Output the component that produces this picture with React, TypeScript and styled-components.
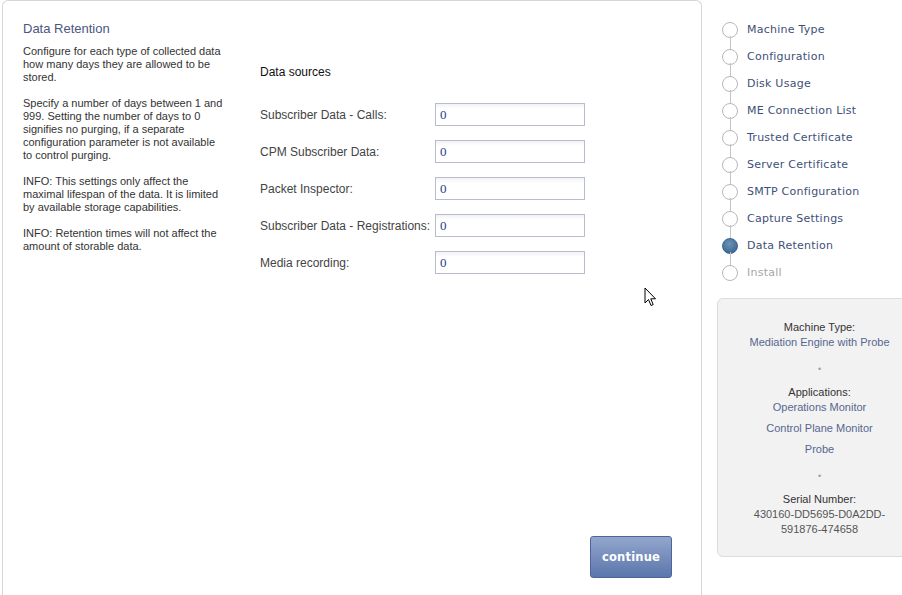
import React from "react";
import styled, { createGlobalStyle } from "styled-components";

const GlobalStyle = createGlobalStyle`
  html, body {
    margin: 0;
    padding: 0;
    background: #ffffff;
    overflow: hidden;
  }
  body {
    font-family: Tahoma, "Liberation Sans", Arial, sans-serif;
  }
`;

const Page = styled.div`
  display: flex;
  width: 940px;
  height: 595px;
  padding-left: 2px;
  box-sizing: border-box;
`;

const MainPanel = styled.div`
  position: relative;
  display: flex;
  flex-direction: column;
  flex-shrink: 0;
  width: 700px;
  height: 610px;
  box-sizing: border-box;
  border: 1px solid #d6d6d6;
  border-bottom: none;
  border-radius: 6px 6px 0 0;
`;

const Content = styled.div`
  display: flex;
  flex: 1;
  padding: 20px 0 0 20px;
`;

const InfoColumn = styled.div`
  width: 201px;
  flex-shrink: 0;
  color: #333333;
  font-size: 11px;
  line-height: 13px;
`;

const Title = styled.div`
  color: #4a5680;
  font-size: 13px;
  line-height: 16px;
  margin-bottom: 8px;
`;

const Para = styled.p`
  margin: 0 0 13px 0;
`;

const FormColumn = styled.div`
  padding: 44px 0 0 36px;
`;

const SourcesTitle = styled.div`
  color: #111111;
  font-size: 12px;
  line-height: 15px;
  margin-bottom: 16px;
`;

const FieldRow = styled.div`
  display: flex;
  align-items: center;
  height: 37px;
`;

const FieldLabel = styled.label`
  width: 175px;
  color: #444444;
  font-size: 12px;
`;

const NumberInput = styled.input`
  width: 150px;
  height: 23px;
  box-sizing: border-box;
  border: 1px solid #b9bccd;
  padding: 1px 4px 0;
  font-family: "Liberation Serif", "Times New Roman", serif;
  font-size: 13px;
  color: #283c8c;
  background: linear-gradient(#f1f2f5 0px, #ffffff 5px);
  outline: none;
`;

const Footer = styled.div`
  display: flex;
  justify-content: flex-end;
  padding: 0 29px 32px 0;
`;

const ContinueButton = styled.button`
  width: 82px;
  height: 42px;
  border: 1px solid #4d6699;
  border-radius: 3px;
  background: linear-gradient(#93a6cd, #5a76ab);
  color: #ffffff;
  font-family: "DejaVu Sans", Verdana, sans-serif;
  font-size: 11.5px;
  font-weight: bold;
  letter-spacing: 0.2px;
  cursor: pointer;
`;

const Cursor = styled.svg`
  position: absolute;
  left: 641px;
  top: 286px;
`;

const Sidebar = styled.div`
  display: flex;
  flex-direction: column;
  flex-shrink: 0;
  padding: 16px 0 0 20px;
  width: 220px;
`;

const StepList = styled.ul`
  list-style: none;
  margin: 0 0 12px 0;
  padding: 0;
`;

const Step = styled.li<{ $last?: boolean }>`
  position: relative;
  display: flex;
  align-items: center;
  height: 27px;
  font-family: "DejaVu Sans", Verdana, sans-serif;
  font-size: 11px;
  letter-spacing: 0.25px;
  color: ${({ $last }) => ($last ? "#a6a6a6" : "#3e5079")};

  &::after {
    content: "";
    display: ${({ $last }) => ($last ? "none" : "block")};
    position: absolute;
    left: 8px;
    top: 20px;
    width: 1px;
    height: 14px;
    background: #c4c4c4;
  }
`;

const Circle = styled.span<{ $active?: boolean }>`
  width: 14px;
  height: 14px;
  border-radius: 50%;
  border: 1px solid ${({ $active }) => ($active ? "#3a6590" : "#b8b8b8")};
  background: ${({ $active }) =>
    $active ? "radial-gradient(circle at 45% 35%, #6c93b8, #2f5d86)" : "#ffffff"};
  margin-right: 9px;
  flex-shrink: 0;
`;

const SummaryBox = styled.div`
  margin-left: -5px;
  width: 205px;
  height: 259px;
  box-sizing: border-box;
  background: #f2f2f2;
  border: 1px solid #dcdcdc;
  border-radius: 6px;
  padding-top: 21px;
  text-align: center;
  font-size: 11px;
  line-height: 15px;
`;

const SummaryLabel = styled.div`
  color: #333333;
`;

const SummaryValue = styled.div<{ $gap?: boolean }>`
  color: #56678f;
  margin-top: ${({ $gap }) => ($gap ? "6px" : "0")};
`;

const SerialValue = styled.div`
  color: #555555;
`;

const Separator = styled.div`
  color: #a0a0a0;
  font-size: 9px;
  line-height: 10px;
  margin: 14px 0 11px;
`;

const steps = [
  "Machine Type",
  "Configuration",
  "Disk Usage",
  "ME Connection List",
  "Trusted Certificate",
  "Server Certificate",
  "SMTP Configuration",
  "Capture Settings",
  "Data Retention",
  "Install",
];

const sources = [
  "Subscriber Data - Calls:",
  "CPM Subscriber Data:",
  "Packet Inspector:",
  "Subscriber Data - Registrations:",
  "Media recording:",
];

const App = () => {
  return (
    <Page>
      <GlobalStyle />
      <MainPanel>
        <Content>
          <InfoColumn>
            <Title>Data Retention</Title>
            <Para>
              Configure for each type of collected data how many days they are
              allowed to be stored.
            </Para>
            <Para>
              Specify a number of days between 1 and 999. Setting the number of
              days to 0 signifies no purging, if a separate configuration
              parameter is not available to control purging.
            </Para>
            <Para>
              INFO: This settings only affect the maximal lifespan of the data.
              It is limited by available storage capabilities.
            </Para>
            <Para>
              INFO: Retention times will not affect the amount of storable
              data.
            </Para>
          </InfoColumn>
          <FormColumn>
            <SourcesTitle>Data sources</SourcesTitle>
            {sources.map((s) => (
              <FieldRow key={s}>
                <FieldLabel>{s}</FieldLabel>
                <NumberInput defaultValue="0" />
              </FieldRow>
            ))}
          </FormColumn>
        </Content>
        <Footer>
          <ContinueButton>continue</ContinueButton>
        </Footer>
        <Cursor width="13" height="21" viewBox="0 0 13 21">
          <path
            d="M1 1 L1 16 L4.5 12.5 L7 18.5 L9.2 17.6 L6.8 11.8 L11.5 11.8 Z"
            fill="#ffffff"
            stroke="#000000"
            strokeWidth="1"
            strokeLinejoin="miter"
          />
        </Cursor>
      </MainPanel>
      <Sidebar>
        <StepList>
          {steps.map((s, i) => (
            <Step key={s} $last={i === steps.length - 1}>
              <Circle $active={s === "Data Retention"} />
              {s}
            </Step>
          ))}
        </StepList>
        <SummaryBox>
          <SummaryLabel>Machine Type:</SummaryLabel>
          <SummaryValue>Mediation Engine with Probe</SummaryValue>
          <Separator>•</Separator>
          <SummaryLabel>Applications:</SummaryLabel>
          <SummaryValue>Operations Monitor</SummaryValue>
          <SummaryValue $gap>Control Plane Monitor</SummaryValue>
          <SummaryValue $gap>Probe</SummaryValue>
          <Separator>•</Separator>
          <SummaryLabel>Serial Number:</SummaryLabel>
          <SerialValue>430160-DD5695-D0A2DD-</SerialValue>
          <SerialValue>591876-474658</SerialValue>
        </SummaryBox>
      </Sidebar>
    </Page>
  );
};

export default App;
